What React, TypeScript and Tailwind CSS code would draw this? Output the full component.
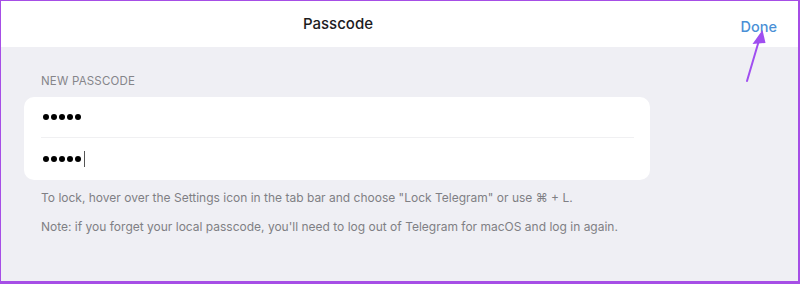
import React from 'react';

const Dots = ({ cursor }: { cursor?: boolean }) => (
  <div className="flex items-center gap-[2px]">
    {[0, 1, 2, 3, 4].map((i) => (
      <span key={i} className="block w-[6px] h-[6px] rounded-full bg-black" />
    ))}
    {cursor && <span className="block w-px h-[16px] bg-[#555] ml-[1px]" />}
  </div>
);

const App = () => {
  return (
    <div
      className="relative w-[800px] h-[284px] overflow-hidden border-l border-t border-r-2 border-b-[3px] border-[#a64ee6] bg-[#efeff4]"
      style={{ fontFamily: 'Inter, "Liberation Sans", "DejaVu Sans", sans-serif' }}
    >
      {/* header */}
      <div className="flex items-center h-[46px] bg-white">
        <div className="w-[674px] text-center text-[15px] font-medium text-[#1c1c1e] pt-[1px]">
          Passcode
        </div>
        <div className="flex-1 flex justify-end pr-[21px] pt-[5px] text-[14.5px] font-medium text-[#4a8fd6]">
          Done
        </div>
      </div>

      {/* body */}
      <div className="pl-[23px] pt-[27px]">
        <div className="pl-[17px] text-[11.5px] tracking-[0.2px] text-[#85858a] leading-[14px]">NEW PASSCODE</div>
        <div className="mt-[9px] w-[626px] rounded-[10px] bg-white">
          <div className="h-[40px] pl-[19px] flex items-center">
            <Dots />
          </div>
          <div className="ml-[17px] mr-[16px] h-px bg-[#f0f0f2]" />
          <div className="h-[42px] pl-[19px] flex items-center">
            <Dots cursor />
          </div>
        </div>
        <div className="pl-[17px] mt-[10px] text-[12px] text-[#7f7f84] leading-[15px]">
          To lock, hover over the Settings icon in the tab bar and choose "Lock Telegram" or use ⌘ + L.
        </div>
        <div className="pl-[17px] mt-[14px] text-[12px] text-[#7f7f84] leading-[15px]">
          Note: if you forget your local passcode, you'll need to log out of Telegram for macOS and log in again.
        </div>
      </div>

      {/* annotation arrow */}
      <svg className="absolute left-[730px] top-[20px]" width="50" height="70" viewBox="0 0 50 70">
        <line x1="16" y1="60" x2="29" y2="16" stroke="#a04ef0" strokeWidth="2" strokeLinecap="round" />
        <path d="M31.5 9 L21.5 23 L34.5 22 Z" fill="#a04ef0" />
      </svg>
    </div>
  );
};

export default App;
